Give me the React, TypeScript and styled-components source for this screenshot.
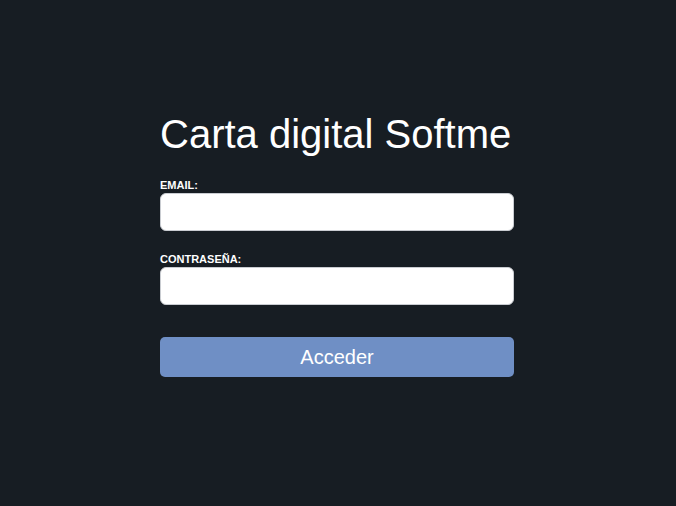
import React from "react";
import styled, { createGlobalStyle } from "styled-components";

const Global = createGlobalStyle`
  html, body {
    margin: 0;
    padding: 0;
    background: #171d23;
    font-family: "Liberation Sans", Arial, sans-serif;
  }
`;

const Page = styled.div`
  min-height: 506px;
  background: #171d23;
  padding: 111px 0 0 160px;
  box-sizing: border-box;
`;

const Form = styled.form`
  width: 354px;
  display: flex;
  flex-direction: column;
`;

const Title = styled.h1`
  margin: 0 0 22px;
  font-size: 40px;
  font-weight: 400;
  line-height: 46px;
  color: #ffffff;
  white-space: nowrap;
`;

const Field = styled.div`
  display: flex;
  flex-direction: column;
  margin-bottom: ${(p: { $mb: number }) => p.$mb}px;
`;

const Label = styled.label`
  font-size: 11px;
  font-weight: 700;
  line-height: 13px;
  color: #ffffff;
  margin-bottom: 1px;
`;

const Input = styled.input`
  height: 38px;
  box-sizing: border-box;
  border: 1px solid #c9ccd1;
  border-radius: 6px;
  background: #ffffff;
  padding: 0 10px;
  font-size: 16px;
  outline: none;
`;

const Button = styled.button`
  height: 40px;
  border: none;
  border-radius: 5px;
  background: #6f8fc5;
  color: #ffffff;
  font-family: "Liberation Sans", Arial, sans-serif;
  font-size: 20px;
  cursor: pointer;
`;

export default function App() {
  return (
    <>
      <Global />
      <Page>
        <Form onSubmit={(e) => e.preventDefault()}>
          <Title>Carta digital Softme</Title>
          <Field $mb={22}>
            <Label htmlFor="email">EMAIL:</Label>
            <Input id="email" type="email" />
          </Field>
          <Field $mb={32}>
            <Label htmlFor="password">CONTRASEÑA:</Label>
            <Input id="password" type="password" />
          </Field>
          <Button type="submit">Acceder</Button>
        </Form>
      </Page>
    </>
  );
}
